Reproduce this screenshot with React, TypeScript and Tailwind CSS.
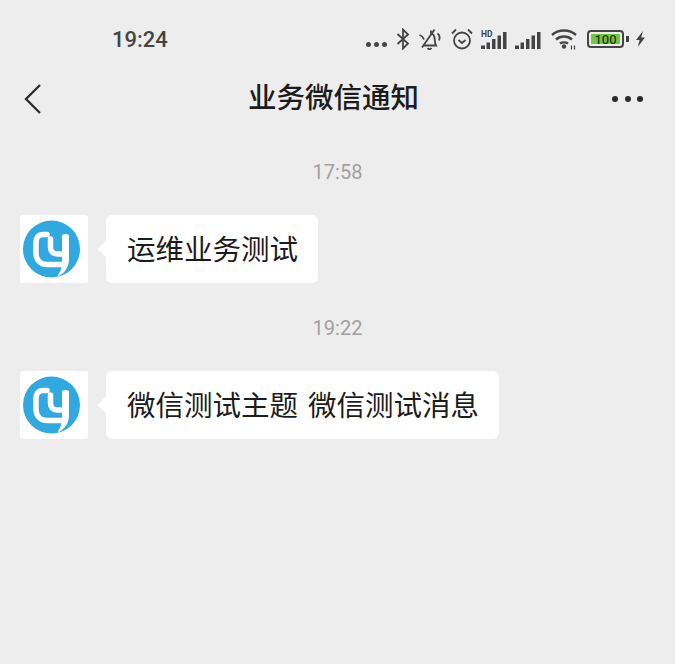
const cjk = "font-['Roboto','Noto_Sans_CJK_SC',sans-serif]";

function Bars() {
  return (
    <>
      <rect x="0" y="13.5" width="4" height="3.5" />
      <rect x="5.5" y="10.5" width="3.5" height="6.5" />
      <rect x="11" y="7" width="3.5" height="10" />
      <rect x="16.5" y="3.5" width="3.5" height="13.5" />
      <rect x="22" y="0" width="3.5" height="17" />
    </>
  );
}

function StatusIcons() {
  return (
    <div className="flex items-center text-[#444444]">
      <div className="flex gap-[3px] w-[22px] mt-[10px]">
        <span className="w-[5px] h-[5px] rounded-full bg-[#444444]" />
        <span className="w-[5px] h-[5px] rounded-full bg-[#444444]" />
        <span className="w-[5px] h-[5px] rounded-full bg-[#444444]" />
      </div>
      {/* bluetooth */}
      <svg width="14" height="22" viewBox="0 0 14 22" fill="none" stroke="currentColor" strokeWidth="1.8" className="ml-[8px]">
        <path d="M1.5 6 L12 15.5 L7 20.5 V1.5 L12 6.5 L1.5 16" />
      </svg>
      {/* muted bell */}
      <svg width="22" height="22" viewBox="0 0 22 22" fill="none" stroke="currentColor" strokeWidth="1.8" className="ml-[9px]">
        <path d="M0.5 7 C2.5 7.5 4 9 5 11.5 M4 17.5 H17 C15.5 15 16 12.5 15.5 9.5 C15 7 14 5.5 12 5 V2.5 M8.5 20 C9.5 21.5 11.5 21.5 12.5 20 M15.5 1.5 L3 19.5 M18.5 5.5 C20.5 7 21 10 20 12.5" />
      </svg>
      {/* alarm */}
      <svg width="22" height="22" viewBox="0 0 22 22" fill="none" stroke="currentColor" strokeWidth="1.8" className="ml-[10px]">
        <circle cx="11" cy="12.5" r="8" />
        <path d="M7.5 12 L11 15 L14.5 12 M1 5.5 L5 1.5 M21 5.5 L17 1.5" />
      </svg>
      {/* HD signal */}
      <svg width="26" height="19" viewBox="0 0 26 19" fill="currentColor" className="ml-[8px]">
        <text x="0" y="7" fontSize="8.5" fontWeight="700" fontFamily="Roboto, sans-serif">HD</text>
        <g transform="translate(0 2)">
          <Bars />
        </g>
      </svg>
      {/* signal */}
      <svg width="26" height="19" viewBox="0 0 26 19" fill="currentColor" className="ml-[8px]">
        <g transform="translate(0 2)">
          <Bars />
        </g>
      </svg>
      {/* wifi */}
      <svg width="26" height="22" viewBox="0 0 26 22" fill="none" stroke="currentColor" strokeWidth="2.4" className="ml-[10px]">
        <path d="M1 7 C7.5 1 18.5 1 25 7 M5 11.5 C9.5 7.5 16.5 7.5 21 11.5 M9 15.5 C11 14 15 14 17 15.5" />
        <circle cx="13" cy="18.5" r="2.2" fill="currentColor" stroke="none" />
        <path d="M20.5 17.5 V21.5 M23.5 17.5 V21.5" strokeWidth="1.2" />
      </svg>
      {/* battery */}
      <div className="flex items-center ml-[10px] w-[42px]">
        <div className="w-[37px] h-[18px] border-2 border-[#444444] rounded-[4px] p-[2px] flex">
          <div className="flex-1 bg-[#72c83c] rounded-[1px] flex items-center justify-center text-[13px] leading-none font-medium text-[#2c3a1e] font-['Roboto',sans-serif]">
            100
          </div>
        </div>
        <span className="w-[2.5px] h-[6px] bg-[#444444] ml-[2px]" />
      </div>
      <svg width="11" height="16" viewBox="0 0 11 16" fill="currentColor" className="ml-[6px]">
        <path d="M8 0 L1 9 H4.6 L2.8 16 L10 6.5 H6.2 Z" />
      </svg>
    </div>
  );
}

function Logo() {
  return (
    <div className="w-[68px] h-[68px] bg-white rounded-[3px] shrink-0">
      <svg width="68" height="68" viewBox="0 0 68 68">
        <circle cx="31.5" cy="34" r="28.5" fill="#2fa9e0" />
        <g fill="none" stroke="white" strokeWidth="5.5" strokeLinecap="round">
          <path d="M27 19.5 H23 C18.5 19.5 16 22.5 16 27 V38 C16 45 20.5 49.5 27 49.5 H44" />
          <path d="M30.5 24 V32 C30.5 36.5 33 39 37 39 H44" />
        </g>
        <path d="M42 20 C44 18.5 47 18.5 49 20 V44 C49 52 45 58 37 62 C41 56 42 52 42 47 Z" fill="white" />
      </svg>
    </div>
  );
}

function Message({ time, text }: { time: string; text: string }) {
  return (
    <div className="flex flex-col">
      <div className="text-center text-[20px] leading-[24px] text-[#a0a0a0] font-['Roboto',sans-serif]">{time}</div>
      <div className="flex items-center pl-[20px] mt-[31px]">
        <Logo />
        <div className="relative ml-[18px] bg-white rounded-[6px] h-[68px] flex items-center pl-[21px] pr-[20px]">
          <span className="absolute left-[-6px] top-[28px] w-[12px] h-[12px] bg-white rotate-45" />
          <span className={`relative top-[2px] text-[28.5px] [word-spacing:3px] text-[#1c1c1c] ${cjk}`}>{text}</span>
        </div>
      </div>
    </div>
  );
}

export default function App() {
  return (
    <div className="w-[675px] h-[664px] bg-[#ededed] overflow-hidden">
      <div className="h-[78px] flex items-center justify-between pl-[112px] pr-[29px]">
        <span className="text-[22px] font-medium text-[#444444] font-['Roboto',sans-serif]">19:24</span>
        <StatusIcons />
      </div>
      <div className="h-[38px] grid grid-cols-[1fr_auto_1fr] items-center pl-[23px] pr-[31px]">
        <svg width="20" height="32" viewBox="0 0 20 32" fill="none" stroke="#2b2b2b" strokeWidth="2.3" className="justify-self-start">
          <path d="M17 2 L3 16 L17 30" />
        </svg>
        <div className={`text-[28.5px] font-medium text-[#1c1c1c] ${cjk}`}>业务微信通知</div>
        <div className="flex gap-[6.5px] justify-self-end mr-[1px]">
          <span className="w-[6px] h-[6px] rounded-full bg-[#2b2b2b]" />
          <span className="w-[6px] h-[6px] rounded-full bg-[#2b2b2b]" />
          <span className="w-[6px] h-[6px] rounded-full bg-[#2b2b2b]" />
        </div>
      </div>
      <div className="flex flex-col gap-[33px] pt-[44px]">
        <Message time="17:58" text="运维业务测试" />
        <Message time="19:22" text="微信测试主题 微信测试消息" />
      </div>
    </div>
  );
}
